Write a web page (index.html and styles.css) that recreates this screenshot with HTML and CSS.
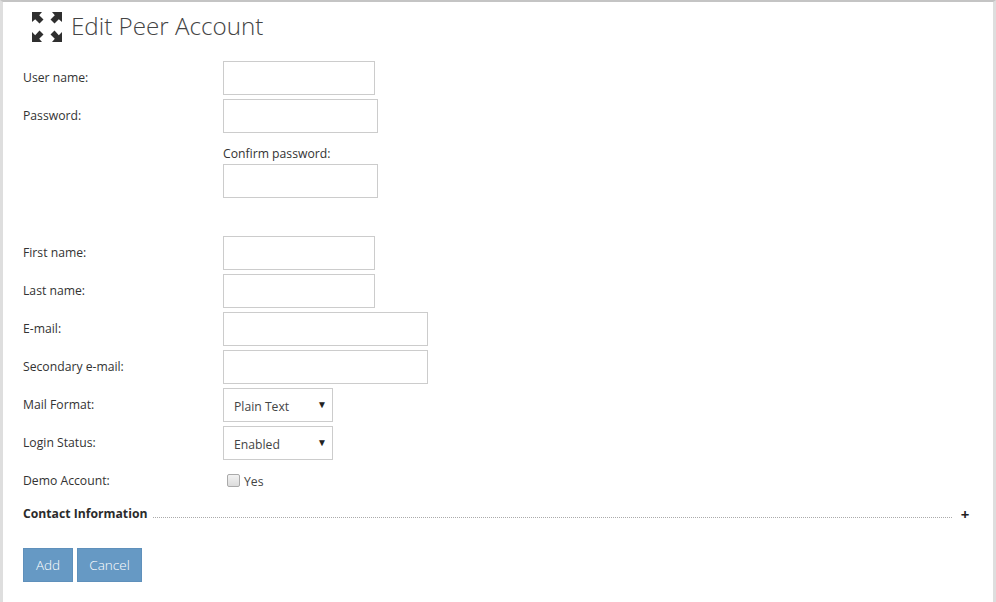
FILE: index.html
```html
<!DOCTYPE html>
<html lang="en">
<head>
<meta charset="utf-8">
<title>Edit Peer Account</title>
<link rel="stylesheet" href="styles.css">
</head>
<body>
<div class="page">
  <header class="head">
    <svg class="head-icon" viewBox="0 0 32 32" width="32" height="32" aria-hidden="true">
      <path fill="#2f2f2f" d="M1 1h10L8.200 4.200 12.500 8.500 8.500 12.500 4.200 8.200 1 11zM31 1v10L27.800 8.200 23.500 12.500 19.500 8.500 23.800 4.200 21 1zM1 31V21l3.200 3.200 4.300-4.700 4 4-4.300 4.300L11 31zM31 31H21l2.800-3.200-4.300-4.300 4-4 4.300 4.700L31 21z"/>
    </svg>
    <h1 class="title">Edit Peer Account</h1>
  </header>
  <form class="form">
    <div class="row"><label class="lbl">User name:</label><input class="field w-s" type="text"></div>
    <div class="row"><label class="lbl">Password:</label><input class="field w-m" type="password"></div>
    <div class="row confirm">
      <span class="lbl"></span>
      <div class="stack"><label class="sub-lbl">Confirm password:</label><input class="field w-m" type="password"></div>
    </div>
    <div class="row"><label class="lbl">First name:</label><input class="field w-s" type="text"></div>
    <div class="row"><label class="lbl">Last name:</label><input class="field w-s" type="text"></div>
    <div class="row"><label class="lbl">E-mail:</label><input class="field w-l" type="text"></div>
    <div class="row"><label class="lbl">Secondary e-mail:</label><input class="field w-l" type="text"></div>
    <div class="row"><label class="lbl">Mail Format:</label><div class="select"><span class="sel-text">Plain Text</span><span class="caret">▼</span></div></div>
    <div class="row"><label class="lbl">Login Status:</label><div class="select"><span class="sel-text">Enabled</span><span class="caret">▼</span></div></div>
    <div class="row demo"><label class="lbl">Demo Account:</label><span class="check"><span class="box"></span><span class="yes">Yes</span></span></div>
    <div class="section"><span class="section-name">Contact Information</span><span class="dots"></span><span class="plus">+</span></div>
    <div class="actions"><button class="btn btn-add" type="button">Add</button><button class="btn btn-cancel" type="button">Cancel</button></div>
  </form>
</div>
</body>
</html>
```
FILE: styles.css
```css
* { box-sizing: border-box; }
html, body { margin: 0; height: 100%; background: #fff; }
body { overflow: hidden; font-family: "Open Sans", "Noto Sans", sans-serif; font-size: 12.2px; color: #333; }
.page { height: 602px; border-top: 2px solid #c4c4c4; border-left: 3px solid #dedede; border-right: 3px solid #dedede; padding-left: 20px; }
.head { display: flex; align-items: center; height: 46px; padding: 0 0 0 8px; gap: 8px; }
.head-icon { flex: none; margin-top: 4px; }
.title { margin: 2px 0 0; font-size: 24.2px; font-weight: 300; color: #444; line-height: 46px; white-space: nowrap; }
.form { display: flex; flex-direction: column; padding-top: 13px; }
.row { display: flex; min-height: 34px; margin-bottom: 4px; }
.lbl { flex: none; width: 200px; padding-top: 8px; line-height: 18px; color: #333; }
.field { display: block; height: 34px; border: 1px solid #ccc; background: #fff; padding: 0 10px; }
.w-s { width: 152px; }
.w-m { width: 155px; }
.w-l { width: 205px; }
.confirm { margin-bottom: 38px; padding-top: 3px; }
.stack { display: flex; flex-direction: column; }
.sub-lbl { height: 24px; padding-top: 5px; line-height: 18px; }
.select { display: flex; justify-content: space-between; width: 110px; height: 34px; border: 1px solid #ccc; padding: 0 5px 0 10px; }
.sel-text { line-height: 35px; color: #444; }
.caret { font-size: 10px; line-height: 30px; color: #222; }
.demo { min-height: 25px; margin-bottom: 0; padding-top: 3px; }
.demo .lbl { padding-top: 5px; }
.check { display: flex; align-items: flex-start; padding: 7px 0 0 4px; gap: 4px; }
.box { width: 13px; height: 13px; border: 1px solid #aaa; border-radius: 2px; background: linear-gradient(#f2f2f2, #dcdcdc); }
.yes { margin-top: -1px; line-height: 18px; color: #444; }
.section { display: flex; align-items: center; height: 20px; margin-top: 13px; }
.section-name { font-weight: 700; line-height: 18px; color: #2b2b2b; white-space: nowrap; }
.dots { flex: 1; margin: 7px 8px 0 6px; border-top: 1px dotted #aaa; }
.plus { width: 10px; margin-right: 23px; font-size: 15px; font-weight: 700; line-height: 18px; color: #222; text-align: center; }
.actions { display: flex; gap: 4px; margin-top: 24px; }
.btn { height: 34px; border: 1px solid #5f90bb; background: #6699c4; color: #fff; font-family: inherit; font-size: 13.500px; font-weight: 300; padding: 0; }
.btn-add { width: 50px; }
.btn-cancel { width: 65px; }
```
